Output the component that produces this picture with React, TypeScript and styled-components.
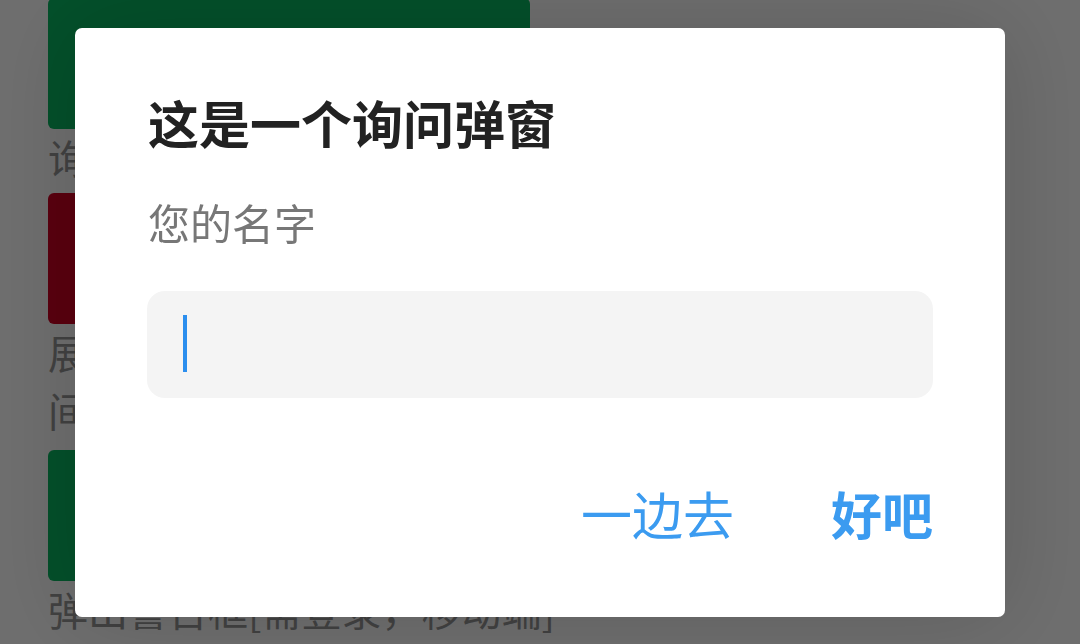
import React from 'react';
import styled, {createGlobalStyle} from 'styled-components';

const GlobalStyle = createGlobalStyle`
  html, body {
    margin: 0;
    padding: 0;
    background: #ffffff;
    overflow: hidden;
  }
  body {
    font-family: "Noto Sans CJK SC", "Noto Sans", sans-serif;
  }
`;

const Page = styled.div`
  width: 1080px;
  height: 644px;
  padding-left: 48px;
  box-sizing: border-box;
  overflow: hidden;
`;

const DemoList = styled.div`
  display: flex;
  flex-direction: column;
  margin-top: -2px;
`;

const DemoItem = styled.div<{ $gap: number }>`
  display: flex;
  flex-direction: column;
  margin-bottom: ${p => p.$gap}px;
`;

const Swatch = styled.div<{ $color: string }>`
  width: 482px;
  height: 131px;
  border-radius: 6px;
  background: ${p => p.$color};
`;

const Caption = styled.div`
  margin-top: -2px;
  font-size: 40px;
  line-height: 60px;
  color: #979797;
  white-space: nowrap;
`;

const Overlay = styled.div`
  position: fixed;
  inset: 0;
  background: rgba(0, 0, 0, 0.57);
  display: flex;
  align-items: center;
  justify-content: center;
`;

const Dialog = styled.div`
  width: 930px;
  box-sizing: border-box;
  padding: 64px 72px 74px 73px;
  background: #ffffff;
  border-radius: 7px;
  box-shadow: 0 0 90px rgba(0, 0, 0, 0.16);
  display: flex;
  flex-direction: column;
`;

const Title = styled.div`
  font-size: 51px;
  line-height: 60px;
  font-weight: 700;
  color: #222222;
`;

const Label = styled.div`
  margin-top: 45px;
  font-size: 42px;
  line-height: 50px;
  color: #777777;
`;

const InputBox = styled.div`
  margin-top: 44px;
  height: 107px;
  width: 786px;
  margin-left: -1px;
  border-radius: 18px;
  background: #f4f4f4;
  display: flex;
  align-items: center;
  padding-left: 36px;
  box-sizing: border-box;
`;

const Caret = styled.span`
  width: 4px;
  height: 57px;
  background: #2b8eee;
  margin-top: -1px;
`;

const Actions = styled.div`
  margin-top: 85px;
  display: flex;
  justify-content: flex-end;
  gap: 97px;
`;

const ActionButton = styled.button<{ $primary?: boolean }>`
  border: none;
  background: none;
  padding: 0;
  font-family: "Noto Sans CJK SC", "Noto Sans", sans-serif;
  font-size: 51px;
  line-height: 60px;
  color: #3b9bf0;
  font-weight: ${p => (p.$primary ? 700 : 400)};
  cursor: pointer;
`;

const demos = [
    {color: '#09b862', gap: 6, lines: ['询问弹窗[输入框]']},
    {color: '#cf0022', gap: 10, lines: ['展示一个确认框', '间隔提示[带按钮]']},
    {color: '#09b862', gap: 0, lines: ['弹出警告框[需登录，移动端]']},
];

export default function App() {
    return (
        <>
            <GlobalStyle/>
            <Page>
                <DemoList>
                    {demos.map((d, i) => (
                        <DemoItem key={i} $gap={d.gap}>
                            <Swatch $color={d.color}/>
                            {d.lines.map((l, j) => <Caption key={j}>{l}</Caption>)}
                        </DemoItem>
                    ))}
                </DemoList>
            </Page>
            <Overlay>
                <Dialog>
                    <Title>这是一个询问弹窗</Title>
                    <Label>您的名字</Label>
                    <InputBox>
                        <Caret/>
                    </InputBox>
                    <Actions>
                        <ActionButton>一边去</ActionButton>
                        <ActionButton $primary>好吧</ActionButton>
                    </Actions>
                </Dialog>
            </Overlay>
        </>
    );
}
